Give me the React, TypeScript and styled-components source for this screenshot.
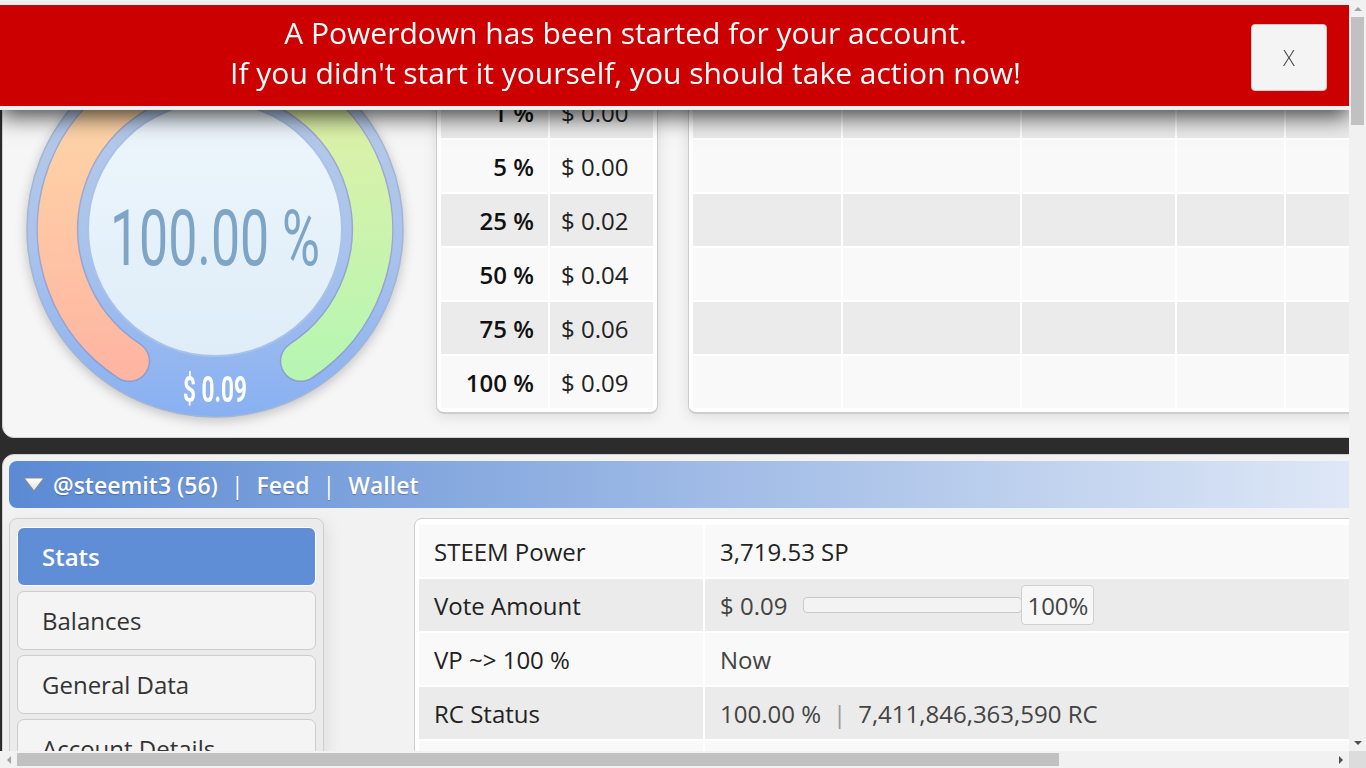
import React from 'react';
import styled, { createGlobalStyle } from 'styled-components';

const GlobalStyle = createGlobalStyle`
  html, body {
    margin: 0;
    padding: 0;
    background: #2c2c2c;
  }
  body {
    font-family: "Open Sans", "Liberation Sans", sans-serif;
    color: #333;
  }
`;

const Page = styled.div`
  width: 1703px;
  min-height: 4986px;
  box-sizing: border-box;
  padding: 19px 8px 0 2px;
  display: flex;
  flex-direction: column;
  gap: 16px;
`;

/* ---------- window scrollbars (drawn over the page) ---------- */

const VScroll = styled.div`
  position: fixed;
  top: 0;
  right: 0;
  bottom: 17px;
  width: 17px;
  z-index: 20;
  background: #f1f1f1;
  display: flex;
  flex-direction: column;
  align-items: center;
`;

const HScroll = styled.div`
  position: fixed;
  left: 0;
  right: 17px;
  bottom: 0;
  height: 17px;
  z-index: 20;
  background: #f1f1f1;
  display: flex;
  align-items: center;
`;

const Corner = styled.div`
  position: fixed;
  right: 0;
  bottom: 0;
  width: 17px;
  height: 17px;
  z-index: 20;
  background: #dcdcdc;
`;

const ArrowCell = styled.div`
  flex: none;
  width: 17px;
  height: 17px;
  display: flex;
  align-items: center;
  justify-content: center;
`;

const Thumb = styled.div<{ $vertical?: boolean; $size: number }>`
  flex: none;
  background: #c1c1c1;
  ${(p) =>
    p.$vertical
      ? `width: 13px; height: ${p.$size}px;`
      : `height: 13px; width: ${p.$size}px;`}
`;

const Spacer = styled.div`
  flex: 1;
`;

const Arrow: React.FC<{ dir: 'up' | 'down' | 'left' | 'right'; dim?: boolean }> = ({ dir, dim }) => {
  const pts = {
    up: '0,4 8,4 4,0',
    down: '0,0 8,0 4,4',
    left: '4,0 4,8 0,4',
    right: '0,0 0,8 4,4',
  }[dir];
  const vertical = dir === 'up' || dir === 'down';
  return (
    <ArrowCell>
      <svg width={vertical ? 8 : 4} height={vertical ? 4 : 8}>
        <polygon points={pts} fill={dim ? '#a3a3a3' : '#505050'} />
      </svg>
    </ArrowCell>
  );
};

/* ---------- powerdown warning ---------- */

const Banner = styled.div`
  position: fixed;
  top: 0;
  left: 0;
  right: 17px;
  z-index: 10;
  display: flex;
  background: #cc0000;
  border-top: 5px solid #eeeeee;
  border-bottom: 4px solid #eeeeee;
  box-shadow: 0 6px 22px rgba(0, 0, 0, 0.75);
  padding: 8px 22px 13px 0;
`;

const BannerText = styled.div`
  flex: 1;
  text-align: center;
  color: #fff;
  font-size: 30px;
  line-height: 40px;
`;

const CloseButton = styled.button`
  align-self: center;
  margin-top: 8px;
  width: 76px;
  height: 67px;
  background: #f4f4f4;
  border: 1px solid #c9c9c9;
  border-radius: 4px;
  font-family: "Open Sans", "Liberation Sans", sans-serif;
  font-size: 22px;
  font-weight: 300;
  color: #444;
`;

/* ---------- vote panel ---------- */

const VotePanel = styled.section`
  display: flex;
  align-items: flex-end;
  background: #f6f6f6;
  border: 1px solid #d2d2d2;
  border-radius: 12px;
  padding: 20px 0 19px 23px;
`;

const GaugeBox = styled.div`
  flex: none;
  width: 378px;
  height: 378px;
  svg {
    display: block;
    filter: drop-shadow(0 3px 6px rgba(0, 0, 0, 0.22));
  }
`;

const TableBox = styled.div<{ $grow?: boolean; $gap: number }>`
  flex: ${(p) => (p.$grow ? '1' : 'none')};
  margin-left: ${(p) => p.$gap}px;
  margin-bottom: 4px;
  margin-right: ${(p) => (p.$grow ? '10px' : '0')};
  background: #fff;
  border: 1px solid #cdcdcd;
  border-bottom-width: 2px;
  border-radius: 8px;
  padding: 2px;
  box-shadow: 0 3px 14px rgba(0, 0, 0, 0.1);
  overflow: hidden;
`;

const Grid = styled.table`
  border-collapse: separate;
  border-spacing: 2px;
  width: 100%;
`;

const Row = styled.tr<{ $shade: boolean }>`
  td {
    height: 52px;
    padding: 0;
    background: ${(p) => (p.$shade ? '#ebebeb' : '#f9f9f9')};
  }
`;

const PctCell = styled.td`
  width: 93px;
  padding-right: 14px !important;
  text-align: right;
  font-size: 24px;
  font-weight: 600;
  color: #111;
`;

const UsdCell = styled.td`
  width: 92px;
  padding-left: 11px !important;
  font-size: 24px;
  color: #222;
`;

const EmptyCell = styled.td<{ $w?: number }>`
  width: ${(p) => (p.$w ? `${p.$w}px` : 'auto')};
`;

/* ---------- account panel ---------- */

const AccountPanel = styled.section`
  background: #f2f2f2;
  border: 1px solid #d2d2d2;
  border-radius: 12px;
  padding: 6px;
  min-height: 4400px;
`;

const AccountBar = styled.div`
  height: 47px;
  border-radius: 8px;
  background: linear-gradient(to right, #5b8ad4, #ffffff);
  display: flex;
  align-items: center;
  padding-left: 13px;
  color: #fff;
  font-size: 23px;
  font-weight: 600;
  text-shadow: 0 1px 1px rgba(0, 0, 0, 0.25);
  svg {
    margin-right: 7px;
  }
`;

const Sep = styled.span`
  margin: 0 13px;
  font-weight: 400;
`;

const AccountBody = styled.div`
  display: flex;
  align-items: flex-start;
  margin-top: 10px;
  gap: 90px;
`;

const Menu = styled.nav`
  flex: none;
  width: 299px;
  padding: 8px 7px 7px;
  background: #ebebeb;
  border: 1px solid #cfcfcf;
  border-radius: 8px;
  display: flex;
  flex-direction: column;
  gap: 5px;
  box-shadow: 4px 4px 16px rgba(0, 0, 0, 0.08);
`;

const MenuItem = styled.div<{ $active?: boolean }>`
  height: 57px;
  display: flex;
  align-items: center;
  padding-left: 24px;
  border-radius: 7px;
  border: 1px solid ${(p) => (p.$active ? '#ffffff' : '#cccccc')};
  background: ${(p) => (p.$active ? '#5f8dd6' : '#f4f4f4')};
  color: ${(p) => (p.$active ? '#fff' : '#333')};
  font-size: 24px;
  font-weight: ${(p) => (p.$active ? 600 : 400)};
`;

const StatsBox = styled.div`
  flex: 1;
  background: #fff;
  border: 1px solid #cdcdcd;
  border-radius: 8px;
  padding: 4px 2px;
`;

const StatRow = styled.tr<{ $shade: boolean }>`
  td {
    height: 52px;
    padding: 0 15px;
    font-size: 24px;
    background: ${(p) => (p.$shade ? '#ebebeb' : '#f9f9f9')};
  }
`;

const StatLabel = styled.td`
  width: 254px;
  font-weight: 500;
  color: #222;
`;

const StatValue = styled.td<{ $strong?: boolean }>`
  color: ${(p) => (p.$strong ? '#222' : '#444')};
  font-weight: ${(p) => (p.$strong ? 500 : 400)};
`;

const Inline = styled.div`
  display: flex;
  align-items: center;
`;

const Track = styled.div`
  width: 217px;
  height: 14px;
  margin-left: 16px;
  border: 1px solid #c8c8c8;
  border-radius: 4px;
  background: #f3f3f3;
`;

const PctBox = styled.div`
  width: 71px;
  height: 38px;
  margin-left: -1px;
  border: 1px solid #cfcfcf;
  border-radius: 4px;
  background: #f7f7f7;
  display: flex;
  align-items: center;
  justify-content: center;
  color: #444;
`;

const Pipe = styled.span`
  margin: 0 12px;
  color: #999;
`;

/* ---------- gauge drawing ---------- */

const C = 189;
const pt = (r: number, deg: number) => {
  const a = (deg * Math.PI) / 180;
  return `${(C + r * Math.sin(a)).toFixed(2)} ${(C - r * Math.cos(a)).toFixed(2)}`;
};
const arc = (r: number, from: number, to: number) =>
  `M ${pt(r, from)} A ${r} ${r} 0 0 1 ${pt(r, to)}`;

const Gauge: React.FC<{ pct: string; usd: string }> = ({ pct, usd }) => {
  const left = arc(157.5, 213, 359.9);
  const right = arc(157.5, 0.1, 147);
  return (
    <GaugeBox>
      <svg width="378" height="378" viewBox="0 0 378 378">
        <defs>
          <linearGradient id="rim" x1="0" y1="0" x2="0" y2="1">
            <stop offset="0" stopColor="#bccde6" />
            <stop offset="0.55" stopColor="#a9c3ec" />
            <stop offset="1" stopColor="#88b0f2" />
          </linearGradient>
          <linearGradient id="face" x1="0" y1="0" x2="0" y2="1">
            <stop offset="0" stopColor="#eef6fc" />
            <stop offset="1" stopColor="#deedf8" />
          </linearGradient>
          <linearGradient id="warm" gradientUnits="userSpaceOnUse" x1="0" y1="20" x2="0" y2="330">
            <stop offset="0" stopColor="#fedba8" />
            <stop offset="1" stopColor="#feb5a2" />
          </linearGradient>
          <linearGradient id="cool" gradientUnits="userSpaceOnUse" x1="0" y1="20" x2="0" y2="330">
            <stop offset="0" stopColor="#e6f0a6" />
            <stop offset="1" stopColor="#b6f6b2" />
          </linearGradient>
        </defs>
        <circle cx={C} cy={C} r="188" fill="url(#rim)" stroke="#a3b4d4" strokeWidth="1.5" />
        <path d={left} fill="none" stroke="rgba(140,130,170,0.45)" strokeWidth="42" strokeLinecap="round" />
        <path d={right} fill="none" stroke="rgba(140,130,170,0.45)" strokeWidth="42" strokeLinecap="round" />
        <path d={left} fill="none" stroke="url(#warm)" strokeWidth="39" strokeLinecap="round" />
        <path d={right} fill="none" stroke="url(#cool)" strokeWidth="39" strokeLinecap="round" />
        <circle cx={C} cy={C} r="127" fill="url(#face)" stroke="#a8c2ea" strokeWidth="2" />
        <text
          x={C}
          y="225"
          textAnchor="middle"
          fontFamily="Roboto, 'DejaVu Sans', sans-serif"
          fontWeight="400"
          fontSize="77"
          fill="#7ea5c6"
          textLength="210"
          lengthAdjust="spacingAndGlyphs"
        >
          {pct}
        </text>
        <text
          x={C}
          y="362"
          textAnchor="middle"
          fontFamily="Roboto, 'DejaVu Sans', sans-serif"
          fontWeight="700"
          fontSize="36"
          fill="#ffffff"
          textLength="64"
          lengthAdjust="spacingAndGlyphs"
        >
          {usd}
        </text>
      </svg>
    </GaugeBox>
  );
};

const DownArrow = () => (
  <svg width="24" height="17" viewBox="0 0 24 17">
    <defs>
      <linearGradient id="tri" x1="0" y1="0" x2="0" y2="1">
        <stop offset="0" stopColor="#ffffff" />
        <stop offset="1" stopColor="#e2e2e2" />
      </linearGradient>
    </defs>
    <path d="M2 2 L22 2 L12 15 Z" fill="url(#tri)" stroke="#8a8a8a" strokeWidth="1.2" strokeLinejoin="round" />
  </svg>
);

const voteSteps = [
  ['1 %', '$ 0.00'],
  ['5 %', '$ 0.00'],
  ['25 %', '$ 0.02'],
  ['50 %', '$ 0.04'],
  ['75 %', '$ 0.06'],
  ['100 %', '$ 0.09'],
];

const emptyCols = [148, 177, 153, 107, 150, 150, 0];

const menuItems = ['Stats', 'Balances', 'General Data', 'Account Details', 'Delegations', 'Followers'];

export default function App() {
  return (
    <>
      <GlobalStyle />
      <Banner>
        <BannerText>
          A Powerdown has been started for your account.
          <br />
          If you didn't start it yourself, you should take action now!
        </BannerText>
        <CloseButton>X</CloseButton>
      </Banner>

      <VScroll>
        <Arrow dir="up" dim />
        <Thumb $vertical $size={108} />
        <Spacer />
        <Arrow dir="down" />
      </VScroll>
      <HScroll>
        <Arrow dir="left" dim />
        <Thumb $size={1042} />
        <Spacer />
        <Arrow dir="right" />
      </HScroll>
      <Corner />

      <Page>
        <VotePanel>
          <Gauge pct="100.00 %" usd="$ 0.09" />
          <TableBox $gap={32}>
            <Grid>
              <tbody>
                {voteSteps.map(([p, v], i) => (
                  <Row key={p} $shade={i % 2 === 0}>
                    <PctCell>{p}</PctCell>
                    <UsdCell>{v}</UsdCell>
                  </Row>
                ))}
              </tbody>
            </Grid>
          </TableBox>
          <TableBox $gap={30} $grow>
            <Grid>
              <tbody>
                {voteSteps.map(([p], i) => (
                  <Row key={p} $shade={i % 2 === 0}>
                    {emptyCols.map((w, j) => (
                      <EmptyCell key={j} $w={w || undefined} />
                    ))}
                  </Row>
                ))}
              </tbody>
            </Grid>
          </TableBox>
        </VotePanel>

        <AccountPanel>
          <AccountBar>
            <DownArrow />
            @steemit3 (56)
            <Sep>|</Sep>
            Feed
            <Sep>|</Sep>
            Wallet
          </AccountBar>
          <AccountBody>
            <Menu>
              {menuItems.map((m, i) => (
                <MenuItem key={m} $active={i === 0}>
                  {m}
                </MenuItem>
              ))}
            </Menu>
            <StatsBox>
              <Grid>
                <tbody>
                  <StatRow $shade={false}>
                    <StatLabel>STEEM Power</StatLabel>
                    <StatValue $strong>3,719.53 SP</StatValue>
                  </StatRow>
                  <StatRow $shade>
                    <StatLabel>Vote Amount</StatLabel>
                    <StatValue>
                      <Inline>
                        $ 0.09
                        <Track />
                        <PctBox>100%</PctBox>
                      </Inline>
                    </StatValue>
                  </StatRow>
                  <StatRow $shade={false}>
                    <StatLabel>VP ~&gt; 100 %</StatLabel>
                    <StatValue>Now</StatValue>
                  </StatRow>
                  <StatRow $shade>
                    <StatLabel>RC Status</StatLabel>
                    <StatValue>
                      100.00 %<Pipe>|</Pipe>7,411,846,363,590 RC
                    </StatValue>
                  </StatRow>
                  <StatRow $shade={false}>
                    <StatLabel>Reputation</StatLabel>
                    <StatValue>56.12</StatValue>
                  </StatRow>
                  <StatRow $shade>
                    <StatLabel>Followers</StatLabel>
                    <StatValue>1,204</StatValue>
                  </StatRow>
                </tbody>
              </Grid>
            </StatsBox>
          </AccountBody>
        </AccountPanel>
      </Page>
    </>
  );
}
